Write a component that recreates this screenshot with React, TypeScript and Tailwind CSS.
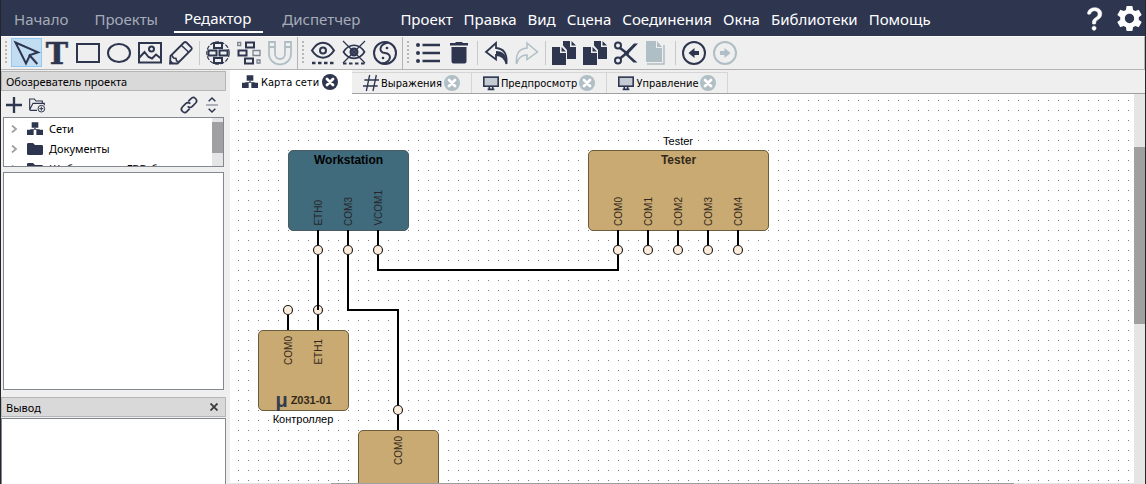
import type { ReactNode } from "react";
import { BsQuestionLg } from "react-icons/bs";
import { MdSettings } from "react-icons/md";

const INK = "#2e364f";
const MUTED = "#b0bec5";

function Icon({ children, color = INK, size = 24 }: { children: ReactNode; color?: string; size?: number }) {
  return (
    <svg
      width={size}
      height={size}
      viewBox="0 0 24 24"
      fill="none"
      stroke={color}
      strokeWidth="2"
      aria-hidden="true"
      className="block shrink-0 overflow-visible"
    >
      {children}
    </svg>
  );
}

function CopyIcon() {
  return (
    <Icon>
      <g fill={INK} stroke="none">
        <path d="M11 0h7v6h6v12h-9V9l-4-4.500z" />
        <path d="M19.500 0l4.500 4.500h-4.500z" />
        <path d="M0 6h8v6h6v12H0z" />
        <path d="M9.500 6l4.500 4.500H9.500z" />
      </g>
    </Icon>
  );
}

function NetworkIcon({ size = 16 }: { size?: number }) {
  return (
    <Icon size={size}>
      <g fill={INK} stroke="none">
        <path d="M7 2h10v8H7zM0 13h10v8H0zM14 13h10v8H14z" />
        <path d="M11 10h2v2h6v1H5v-1h6z" />
      </g>
    </Icon>
  );
}

function MonitorIcon() {
  return (
    <Icon size={16}>
      <rect x="1.200" y="3.200" width="21.600" height="13.600" strokeWidth="2.400" fill="#c5cbd3" />
      <path d="M9.500 17v4M14.500 17v4M7 21.500h10" strokeWidth="2.400" />
    </Icon>
  );
}

function HashIcon() {
  return (
    <Icon size={16}>
      <path d="M10 0L5 24M20 0l-5 24M2 7.500h22M0 16.500h22" />
    </Icon>
  );
}

function FolderIcon() {
  return (
    <Icon size={16}>
      <path d="M0 5a2 2 0 012-2h7l3 3h10a2 2 0 012 2v11a2 2 0 01-2 2H2a2 2 0 01-2-2z" fill={INK} stroke="none" />
    </Icon>
  );
}

function CloseIcon({ active }: { active?: boolean }) {
  return (
    <svg width="16" height="16" viewBox="0 0 16 16" aria-hidden="true" className="block">
      <circle cx="8" cy="8" r="8" fill={active ? INK : MUTED} />
      <path d="M5 5l6 6M11 5l-6 6" stroke="#fff" strokeWidth="2.800" strokeLinecap="round" />
    </svg>
  );
}

type Tool = { label: string; icon: ReactNode; active?: boolean } | "separator";

const drawTools: Tool[] = [
  {
    label: "Выбор",
    active: true,
    icon: (
      <Icon>
        <path d="M1.500 1.500L24 11.300l-8 2.700-4 8.500z" />
        <path d="M15 13.500l8.300 9.500" />
      </Icon>
    ),
  },
  {
    label: "Текст",
    icon: (
      <Icon>
        <text
          x="12"
          y="23"
          textAnchor="middle"
          fill={INK}
          stroke={INK}
          strokeWidth="0.500"
          className="font-['DejaVu_Serif',serif] text-[30px] font-bold"
        >
          T
        </text>
      </Icon>
    ),
  },
  {
    label: "Прямоугольник",
    icon: (
      <Icon>
        <rect x="1" y="3" width="22" height="18" />
      </Icon>
    ),
  },
  {
    label: "Эллипс",
    icon: (
      <Icon>
        <ellipse cx="12" cy="12" rx="11" ry="9" />
      </Icon>
    ),
  },
  {
    label: "Изображение",
    icon: (
      <Icon>
        <rect x="1" y="2" width="22" height="19.500" />
        <circle cx="13.500" cy="8" r="2.500" />
        <path d="M1 17l5.500-6 4 5 3.500 1.500 4-4L23 17.500" />
      </Icon>
    ),
  },
  {
    label: "Карандаш",
    icon: (
      <Icon>
        <path d="M1 22.500l.5-7.500L15 1.500a2 2 0 012.500 0l5 5a2 2 0 010 2L8.500 22.500z" strokeWidth="1.800" />
        <path d="M12.500 4.500l7.500 7M3 14.500l1.500 2.500 2.500.5.500 2.500 2 .5" strokeWidth="1.500" />
        <path d="M1 18.500L5 22.500H1z" fill={INK} stroke="none" />
      </Icon>
    ),
  },
  "separator",
  {
    label: "Сгруппировать",
    icon: (
      <Icon>
        <circle cx="12" cy="12" r="11.200" strokeWidth="1.200" strokeDasharray="4 1.500" />
        <path d="M8 2h8v5H8zM2.500 9.500h8v5h-8zM13.500 9.500h8v5h-8zM8 17h8v5H8z" />
      </Icon>
    ),
  },
  {
    label: "Разгруппировать",
    icon: (
      <Icon>
        <path d="M9 1.500h8v5H9zM1.500 9.500h8v5h-8zM8 17.500h8v5H8z" />
        <path d="M.7 1.500h3v3h-3zM16 9.500h7v5h-7zM20 19h3v3h-3z" stroke="#7c8491" strokeWidth="1.300" />
      </Icon>
    ),
  },
  {
    label: "Привязка",
    icon: (
      <Icon color={MUTED}>
        <path
          d="M1 1h6v12a5 5 0 0010 0V1h6v12a11 10.500 0 01-22 0zM1 6h6M17 6h6"
          strokeWidth="1.800"
        />
      </Icon>
    ),
  },
];

const viewTools: Tool[] = [
  {
    label: "Показать",
    icon: (
      <Icon>
        <path d="M1 9.500C7-1 17-1 23 9.500 17 19 7 19 1 9.500z" />
        <circle cx="12" cy="9.500" r="3" />
        <path d="M1 22h22" strokeDasharray="3.500 2.500" strokeWidth="2.500" />
      </Icon>
    ),
  },
  {
    label: "Скрыть",
    icon: (
      <Icon>
        <path d="M1.500 11C7 2 17 2 22.500 11 17 19.500 7 19.500 1.500 11z" strokeWidth="1.700" />
        <circle cx="12" cy="11" r="3.500" fill="#596174" />
        <path d="M1 0l22 22M23 0L1 22" strokeWidth="1.200" />
        <path d="M1 22.500h22" strokeDasharray="3.500 2.500" strokeWidth="2" />
      </Icon>
    ),
  },
  {
    label: "Баланс",
    icon: (
      <Icon>
        <circle cx="12" cy="12" r="11" />
        <path d="M15.500 1.500C6 3 5 11.500 12 12s7 9-3 10.500" />
        <circle cx="14" cy="7" r="1.300" fill={INK} stroke="none" />
        <circle cx="10" cy="17" r="1.300" fill={INK} stroke="none" />
      </Icon>
    ),
  },
];

const editTools: Tool[] = [
  {
    label: "Список",
    icon: (
      <Icon>
        <path d="M6.500 4H24M6.500 12H24M6.500 20H24" strokeWidth="2.500" />
        <g fill={INK} stroke="none">
          <circle cx="2" cy="4" r="2" />
          <circle cx="2" cy="12" r="2" />
          <circle cx="2" cy="20" r="2" />
        </g>
      </Icon>
    ),
  },
  {
    label: "Удалить",
    icon: (
      <Icon>
        <path d="M3 2h5l1-1h6l1 1h5v2.500H3zM4.500 6h15v14.500a2 2 0 01-2 2h-11a2 2 0 01-2-2z" fill={INK} stroke="none" />
      </Icon>
    ),
  },
  "separator",
  {
    label: "Отменить",
    icon: (
      <Icon>
        <path d="M12 2L2 11l10 7.500V14c6 0 9 3 10.500 9C23.500 13 20 7.500 12 7z" strokeWidth="1.800" />
        <path d="M12 13.500c6 0 9 3 10.500 9C23 14 19 10 12 10z" fill={INK} stroke="none" />
      </Icon>
    ),
  },
  {
    label: "Повторить",
    icon: (
      <Icon color={MUTED}>
        <path d="M12 2l10.500 9L12 18.500V14C6 14 3 17 1.500 23 .5 13 4 7.500 12 7z" strokeWidth="1.500" />
      </Icon>
    ),
  },
  "separator",
  { label: "Копировать", icon: <CopyIcon /> },
  { label: "Дублировать", icon: <CopyIcon /> },
  {
    label: "Вырезать",
    icon: (
      <Icon>
        <circle cx="4" cy="4.500" r="3" />
        <circle cx="4" cy="19.500" r="3" />
        <path d="M6 7l8.500 6.500M6 17.500l8-6.500" strokeWidth="2.500" />
        <path d="M10 12.500L20 2.500h4L14 13l9.500 8.500H19.500z" fill={INK} stroke="none" />
      </Icon>
    ),
  },
  {
    label: "Вставить",
    icon: (
      <Icon color={MUTED}>
        <path d="M1 0h10v7h6v14H1z" fill={MUTED} stroke="none" />
        <path d="M12 0l5 6h-5z" fill={MUTED} stroke="none" />
        <path d="M19 4v19H2" strokeWidth="1.500" />
      </Icon>
    ),
  },
  "separator",
  {
    label: "Назад",
    icon: (
      <Icon>
        <circle cx="12" cy="12" r="11" />
        <path d="M6.500 12l6-5v3H17v4h-4.500v3z" fill={INK} stroke="none" />
      </Icon>
    ),
  },
  {
    label: "Вперёд",
    icon: (
      <Icon color={MUTED}>
        <circle cx="12" cy="12" r="11" />
        <path d="M17.500 12l-6-5v3H7v4h4.500v3z" fill={MUTED} stroke="none" />
      </Icon>
    ),
  },
];

function ToolGroup({ tools, bordered }: { tools: Tool[]; bordered?: boolean }) {
  return (
    <div className={bordered ? "flex border-r border-[#b4b4b4] pr-px" : "flex flex-1"}>
      <div className="w-[10px] shrink-0 py-[4px] pl-[4px]">
        <div className="h-full w-[2px] bg-[repeating-linear-gradient(to_bottom,#b8b8b8_0_2px,transparent_2px_4px)]" />
      </div>
      {tools.map((tool, i) =>
        tool === "separator" ? (
          <div key={i} className="my-[4px] w-[6px] shrink-0 pl-[2px]">
            <div className="h-full w-px bg-[#c8c8c8]" />
          </div>
        ) : (
          <button
            key={i}
            type="button"
            aria-label={tool.label}
            className={
              tool.active
                ? "my-px h-[29px] w-[31px] shrink-0 bg-[#c2dcf2] p-[3px] outline outline-1 -outline-offset-1 outline-[#90c8f6]"
                : "my-px h-[29px] w-[31px] shrink-0 p-[3px]"
            }
          >
            {tool.icon}
          </button>
        )
      )}
    </div>
  );
}

const menus = ["Проект", "Правка", "Вид", "Сцена", "Соединения", "Окна", "Библиотеки", "Помощь"];

function Header() {
  return (
    <header className="flex h-[36px] shrink-0 items-start bg-[#2e364f] text-[15px] text-white">
      <nav className="flex gap-[6px] pl-[3px]">
        {["Начало", "Проекты", "Редактор", "Диспетчер"].map((name) => (
          <a
            key={name}
            href="#"
            className={
              name === "Редактор"
                ? "mr-[3px] h-[33px] border-b-2 border-white pt-[6px] pr-[12px] pl-[10px] leading-[24px]"
                : "h-[33px] px-[10px] pt-[7px] leading-[24px] text-[#a6abb8]"
            }
          >
            {name}
          </a>
        ))}
      </nav>
      <nav className="flex gap-[11px] pt-[7px] pl-[30px]">
        {menus.map((name) => (
          <button key={name} type="button" className="leading-[24px]">
            {name}
          </button>
        ))}
      </nav>
      <div className="ml-auto flex h-[36px] items-center gap-[4px]">
        <button type="button" aria-label="Справка" className="pt-[2px]">
          <BsQuestionLg size={30} stroke="#fff" strokeWidth={0.3} className="block" />
        </button>
        <button type="button" aria-label="Настройки">
          <MdSettings size={31} className="block" />
        </button>
      </div>
    </header>
  );
}

function PanelTitle({ title, closable }: { title: string; closable?: boolean }) {
  return (
    <div className="flex h-[20px] shrink-0 items-center justify-between border border-[#b5b5b5] bg-[#d9d9d9] px-[4px]">
      <h2 className="pt-px text-[11px] leading-[17px]">{title}</h2>
      {closable && (
        <button type="button" aria-label="Закрыть" className="mr-[3px]">
          <svg width="8" height="8" viewBox="0 0 8 8" aria-hidden="true" className="block">
            <path d="M0.500 0.500l7 7M7.500 0.500l-7 7" stroke="#3a3a3a" strokeWidth="1.800" />
          </svg>
        </button>
      )}
    </div>
  );
}

function TreeItem({ icon, label }: { icon: ReactNode; label: string }) {
  return (
    <li className="flex h-[20px] items-center text-[11px]">
      <svg width="7" height="8" viewBox="0 0 7 8" className="mr-[9px] ml-[7px] shrink-0" aria-hidden="true">
        <path d="M1 .5L5 4 1 7.500" fill="none" stroke="#a0a0a0" strokeWidth="1.800" />
      </svg>
      {icon}
      <span className="ml-[6px] whitespace-nowrap">{label}</span>
    </li>
  );
}

function Sidebar() {
  return (
    <aside className="flex w-[229px] shrink-0 flex-col pt-px pr-[4px]">
      <PanelTitle title="Обозреватель проекта" />
      <div className="flex h-[26px] shrink-0 items-center px-[5px] pt-[2px]">
        <button type="button" aria-label="Добавить">
          <Icon size={16}>
            <path d="M12 0v24M0 12h24" strokeWidth="3.500" />
          </Icon>
        </button>
        <button type="button" aria-label="Новая папка" className="ml-[7px]">
          <Icon size={16}>
            <path d="M4 20H2.500L1 19V3h7l2.500 3H20v3M1 19L6 9.500h17v3M4 20h8" strokeWidth="1.700" />
            <circle cx="18.500" cy="17.500" r="5" strokeWidth="1.500" />
            <path d="M18.500 14.500v6M15.500 17.500h6" strokeWidth="1.500" />
          </Icon>
        </button>
        <button type="button" aria-label="Связать" className="ml-auto">
          <Icon size={16}>
            <path
              d="M10 14a5 5 0 007 0l5-5a4.500 4.500 0 00-7-6.500l-4 4M14 10a5 5 0 00-7 0l-5 5a4.500 4.500 0 007 6.500l4-4"
              strokeWidth="2.500"
            />
          </Icon>
        </button>
        <button type="button" aria-label="Свернуть всё" className="mr-px ml-[7px]">
          <Icon size={16}>
            <path d="M7 6.500L12 1.500l5 5M7 17.500l5 5 5-5" strokeWidth="2.200" />
            <path d="M3 12h18" stroke="#8b909c" />
          </Icon>
        </button>
      </div>
      <div className="mx-[2px] flex h-[50px] shrink-0 border border-[#828790] bg-white">
        <ul className="flex-1 overflow-hidden pt-px">
          <TreeItem icon={<NetworkIcon />} label="Сети" />
          <TreeItem icon={<FolderIcon />} label="Документы" />
          <TreeItem icon={<FolderIcon />} label="Шаблоны для FBD-блоков" />
        </ul>
        <div className="w-[11px] bg-[#e5e5e5] pt-[4px]">
          <div className="h-[31px] bg-[#a0a0a0]" />
        </div>
      </div>
      <div className="mx-[2px] mt-[5px] min-h-[60px] flex-1 border border-[#828790] bg-white" />
      <div className="mt-[7px] flex shrink-0 flex-col">
        <PanelTitle title="Вывод" closable />
        <div className="mt-px h-[66px] border border-b-0 border-[#828790] bg-white" />
      </div>
    </aside>
  );
}

const tabs = [
  { name: "Карта сети", icon: <NetworkIcon />, active: true },
  { name: "Выражения", icon: <HashIcon /> },
  { name: "Предпросмотр", icon: <MonitorIcon /> },
  { name: "Управление", icon: <MonitorIcon /> },
];

function Tabs() {
  return (
    <div className="flex h-[24px] shrink-0 items-end shadow-[inset_0_-1px_0_#a0a0a0]">
      {tabs.map((tab) => (
        <div
          key={tab.name}
          className={
            tab.active
              ? "flex h-[24px] items-center gap-[3px] bg-white pr-[14px] pl-[12px]"
              : "mb-px flex h-[21px] items-center gap-[2px] border-t border-r border-[#d5d5d5] px-[11px]"
          }
        >
          {tab.icon}
          <button type="button" className="pt-[2px] font-['DejaVu_Sans_Condensed','DejaVu_Sans',sans-serif] text-[11px] leading-[18px]">
            {tab.name}
          </button>
          <button type="button" aria-label="Закрыть вкладку">
            <CloseIcon active={tab.active} />
          </button>
        </div>
      ))}
    </div>
  );
}

function Ports({ names }: { names: string[] }) {
  return (
    <div className="flex justify-center">
      {names.map((name) => (
        <div key={name} className="flex w-[30px] items-end justify-center">
          <span className="rotate-180 text-[10px] leading-[12px] [writing-mode:vertical-rl]">{name}</span>
        </div>
      ))}
    </div>
  );
}

const pins = [
  [88, 156],
  [118, 156],
  [148, 156],
  [388, 156],
  [418, 156],
  [448, 156],
  [478, 156],
  [508, 156],
  [58, 216],
  [88, 216],
  [168, 316],
];

function Scene() {
  return (
    <main className="relative flex-1 overflow-hidden bg-white font-['Liberation_Sans',Arial,sans-serif]">
      <svg className="absolute inset-0 h-full w-full" aria-hidden="true">
        <defs>
          <pattern id="grid" x="8" y="6" width="10" height="10" patternUnits="userSpaceOnUse">
            <rect width="1" height="1" fill="#7d7d7d" />
          </pattern>
        </defs>
        <rect width="100%" height="100%" fill="url(#grid)" />
      </svg>
      <section className="absolute top-[56px] left-[58px] flex h-[81px] w-[121px] flex-col justify-between rounded-[5px] border border-[#4b5a5e] bg-[#3f6b7d] pt-[2px] pb-[4px]">
        <h3 className="text-center text-[12px] leading-[14px] font-bold text-black">Workstation</h3>
        <div className="text-[#26272a]">
          <Ports names={["ETH0", "COM3", "VCOM1"]} />
        </div>
      </section>
      <p className="absolute top-[41px] left-[358px] w-[180px] text-center text-[11px] leading-[13px]">Tester</p>
      <section className="absolute top-[56px] left-[358px] flex h-[81px] w-[181px] flex-col justify-between rounded-[5px] border border-[#6b5c3e] bg-[#c9aa72] pt-[2px] pb-[4px] text-[#33291a]">
        <h3 className="text-center text-[12px] leading-[14px] font-bold">Tester</h3>
        <Ports names={["COM0", "COM1", "COM2", "COM3", "COM4"]} />
      </section>
      <section className="absolute top-[236px] left-[28px] flex h-[81px] w-[91px] flex-col justify-between rounded-[5px] border border-[#6b5c3e] bg-[#c9aa72] pt-[5px] pb-[3px] text-[#33291a]">
        <Ports names={["COM0", "ETH1"]} />
        <div className="flex items-center justify-center gap-[3px] font-bold">
          <span className="text-[20px] leading-[14px] text-[#333b4f]">μ</span>
          <h3 className="text-[11px] leading-[14px]">Z031-01</h3>
        </div>
      </section>
      <p className="absolute top-[319px] left-[28px] w-[90px] text-center text-[11px] leading-[13px]">Контроллер</p>
      <section className="absolute top-[336px] left-[128px] h-[81px] w-[81px] rounded-[5px] border border-[#6b5c3e] bg-[#c9aa72] pt-[5px] text-[#33291a]">
        <Ports names={["COM0"]} />
      </section>
      <svg className="absolute inset-0 h-full w-full" fill="none" aria-hidden="true">
        <path
          d="M118 136V216H168V336M148 136V176H388V136M418 136V156M448 136V156M478 136V156M508 136V156M58 216V236M88 216V236"
          stroke="#000"
          strokeWidth="2"
        />
        {pins.map(([x, y]) => (
          <circle key={`${x}-${y}`} cx={x} cy={y} r="4.500" fill="#fdebdb" stroke="#222" strokeWidth="1.200" />
        ))}
        <path d="M88 136V151M88 161V216" stroke="#000" strokeWidth="2" />
      </svg>
    </main>
  );
}

export default function App() {
  return (
    <div className="flex h-screen flex-col border-x border-[#24262b] bg-[#efefef] font-['Noto_Sans',sans-serif] text-black">
      <Header />
      <div className="flex h-[34px] shrink-0 border-t border-r border-b border-t-[#fafafa] border-r-[#b4b4b4] border-b-[#b4b4b4]">
        <ToolGroup tools={drawTools} bordered />
        <ToolGroup tools={viewTools} bordered />
        <ToolGroup tools={editTools} />
      </div>
      <div className="flex min-h-0 flex-1">
        <Sidebar />
        <div className="flex min-w-0 flex-1 flex-col">
          <Tabs />
          <div className="flex min-h-0 flex-1">
            <div className="flex min-w-0 flex-1 flex-col">
              <Scene />
              <div className="flex h-px shrink-0 bg-[#e5e5e5] pl-[101px]">
                <div className="w-[85%] bg-[#a0a0a0]" />
              </div>
            </div>
            <div className="w-[11px] shrink-0 bg-[#e5e5e5] pt-[53px]">
              <div className="h-[177px] bg-[#a0a0a0]" />
            </div>
          </div>
        </div>
      </div>
    </div>
  );
}
